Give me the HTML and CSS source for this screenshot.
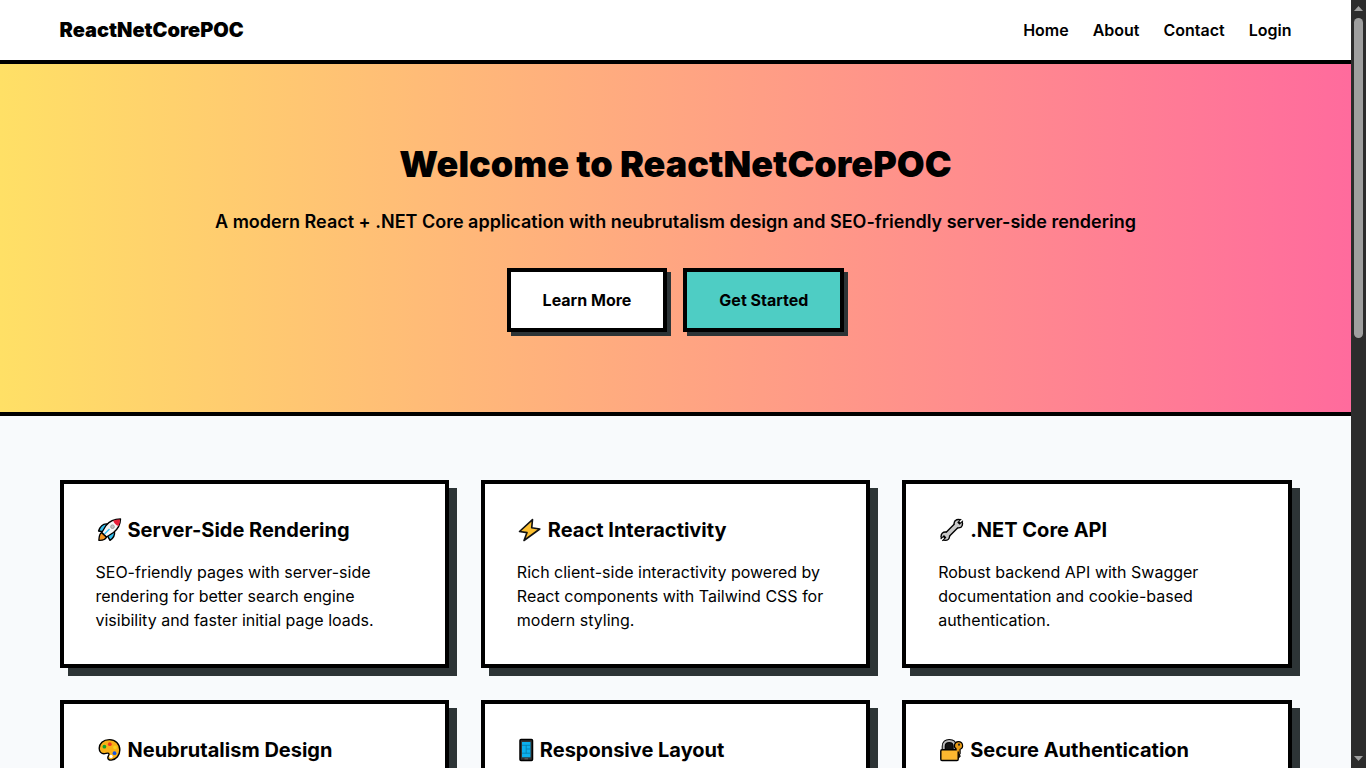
FILE: index.html
```html
<!DOCTYPE html>
<html lang="en">
<head>
  <meta charset="utf-8">
  <meta name="viewport" content="width=device-width, initial-scale=1">
  <title>ReactNetCorePOC</title>
  <link rel="stylesheet" href="styles.css">
</head>
<body>
  <div class="page">
    <header class="header">
      <div class="container header-inner">
        <a class="brand" href="#">ReactNetCorePOC</a>
        <nav class="nav">
          <a href="#">Home</a>
          <a href="#">About</a>
          <a href="#">Contact</a>
          <a href="#">Login</a>
        </nav>
      </div>
    </header>
    <main>
      <section class="hero">
        <h1>Welcome to ReactNetCorePOC</h1>
        <p>A modern React + .NET Core application with neubrutalism design and SEO-friendly server-side rendering</p>
        <div class="actions">
          <button class="btn" type="button">Learn More</button>
          <button class="btn btn-teal" type="button">Get Started</button>
        </div>
      </section>
      <section class="container features">
        <article class="card">
          <h2>
            <svg width="26" height="26" viewBox="0 0 26 26" aria-hidden="true" stroke="#000" stroke-width="1.400" stroke-linejoin="round">
              <path d="M11.500 7C8 6.500 4.500 8.500 2.600 14l5.900 1z" fill="#35c1f1"/>
              <path d="M18.500 14c.5 4-1.500 7.500-4.500 9.300L11 18z" fill="#35c1f1"/>
              <path d="M5.500 15.500c-2.300 1.500-2.500 4.500-2.600 7.800 3.500.2 6.300-.3 7.600-3.300z" fill="#f7941d"/>
              <path d="M24.500 2C18 2 13.500 4 10 8.500L5.800 15.500 10.500 20l7-4.500C22 12 24.300 8 24.500 2z" fill="#f6f6f6"/>
              <path d="M24 2.500c-2.600 0-4.900.5-6.900 1.300 1 2.600 2.800 4.400 5.400 5.300 1-2 1.400-4.200 1.500-6.600z" fill="#e8203a" stroke="none"/>
              <circle cx="16.500" cy="9.700" r="1.800" fill="#c4c4c4" stroke="#9c9c9c" stroke-width="1"/>
              <path d="m8.500 17 5-5" stroke="#35c1f1"/>
            </svg>
            Server-Side Rendering
          </h2>
          <p>SEO-friendly pages with server-side rendering for better search engine visibility and faster initial page loads.</p>
        </article>
        <article class="card">
          <h2>
            <svg width="25" height="26" viewBox="0 0 25 26" aria-hidden="true">
              <path d="M15.500 2.600 2.500 14.500 10 15.600 7 23.500 22.800 12 14.700 10.800z" fill="#fcbf2f" stroke="#111" stroke-width="1.600" stroke-linejoin="round"/>
            </svg>
            React Interactivity
          </h2>
          <p>Rich client-side interactivity powered by React components with Tailwind CSS for modern styling.</p>
        </article>
        <article class="card">
          <h2>
            <svg width="26" height="26" viewBox="0 0 26 26" aria-hidden="true">
              <path d="M7.500 19.500 20.500 6.500" stroke="#000" stroke-width="6.600"/>
              <circle cx="7.300" cy="19.200" r="4.900" fill="#000"/>
              <circle cx="20.300" cy="6.700" r="4.900" fill="#000"/>
              <circle cx="7.300" cy="19.200" r="3.500" fill="#c9c9c9"/>
              <circle cx="20.300" cy="6.700" r="3.500" fill="#c9c9c9"/>
              <path d="M7.500 19.500 20.500 6.500" stroke="#c9c9c9" stroke-width="3.800"/>
              <path d="M7.200 19.300 3.500 23M20.400 6.600 24.100 2.900" stroke="#000" stroke-width="3.400"/>
              <path d="M5.700 20.800 2.500 24M21.900 5.100 25.100 1.900" stroke="#fff" stroke-width="1.400"/>
            </svg>
            .NET Core API
          </h2>
          <p>Robust backend API with Swagger documentation and cookie-based authentication.</p>
        </article>
        <article class="card">
          <h2>
            <svg width="26" height="26" viewBox="0 0 26 26" aria-hidden="true">
              <path d="M13.500 2.600C7 2.600 3.200 6.500 3.200 11.300c0 3.500 2.300 5.400 4.800 5.400 1.700 0 3.500-1 4.600-.4 1.600 1-.8 2.600-.8 4.400 0 1.800 1.600 2.700 3.600 2.400 5-.8 8.400-4.900 8.400-10.100 0-6.100-4.400-10.400-10.300-10.400z" fill="#f9b017" stroke="#000" stroke-width="1.400"/>
              <circle cx="8.400" cy="9.700" r="1.900" fill="#16a32a"/>
              <circle cx="13.800" cy="7.200" r="1.900" fill="#f03a20"/>
              <circle cx="19" cy="10.400" r="1.800" fill="#f8d51b"/>
              <circle cx="18.500" cy="16.200" r="1.900" fill="#1554e0"/>
              <circle cx="15" cy="19.400" r="1.700" fill="#fff"/>
            </svg>
            Neubrutalism Design
          </h2>
        </article>
        <article class="card">
          <h2>
            <svg width="17" height="26" viewBox="0 0 17 26" aria-hidden="true">
              <rect x="3" y="2.500" width="12.500" height="21" rx="1" fill="#333" stroke="#000" stroke-width="1.500"/>
              <path d="M5 5h8.500v15.300H5z" fill="#0db1ee"/>
              <path d="M5 8.300h8.500M9.500 12h4M5 16.200h8.500M9.200 8.300v8" fill="none" stroke="#087aa8" stroke-width=".8"/>
              <path d="M7.500 21.800h3.500" stroke="#666"/>
            </svg>
            Responsive Layout
          </h2>
        </article>
        <article class="card">
          <h2>
            <svg width="26" height="26" viewBox="0 0 26 26" aria-hidden="true">
              <path d="M5.700 13V9.200C5.700 5.600 8 3.900 11.200 3.900s5.500 1.700 5.500 5.300V13" fill="#111" stroke="#000" stroke-width="4"/>
              <path d="M5.700 13V9.200C5.700 5.600 8 3.900 11.200 3.900s5.500 1.700 5.500 5.300V13" fill="none" stroke="#b8b8b8" stroke-width="2"/>
              <path d="M20.500 4.600a4 4 0 0 0-2 7.500v7.400l1.800 1.500 1.800-1.800-.8-1.500.8-1.200v-4.200a4 4 0 0 0-1.600-7.700z" fill="#e89b16" stroke="#000" stroke-width="1.200"/>
              <rect x="2.800" y="12.700" width="17.400" height="10.800" rx="1.200" fill="#fcb830" stroke="#000" stroke-width="1.400"/>
              <path d="M18.700 11v3.500h2.200V11z" fill="#e89b16"/>
              <circle cx="21" cy="7.700" r="1.100" fill="#222"/>
            </svg>
            Secure Authentication
          </h2>
        </article>
      </section>
    </main>
  </div>
  <div class="scrollbar" aria-hidden="true">
    <svg width="9" height="5" viewBox="0 0 9 5"><path d="M4.500 0 9 5H0z" fill="#9f9f9f"/></svg>
    <div class="track"><div class="thumb"></div></div>
    <svg width="9" height="5" viewBox="0 0 9 5"><path d="M0 0h9L4.500 5z" fill="#9f9f9f"/></svg>
  </div>
</body>
</html>
```
FILE: styles.css
```css
*, *::before, *::after {
  box-sizing: border-box;
}

body {
  margin: 0;
  height: 100vh;
  display: flex;
  overflow: hidden;
  font: 400 16px/24px Inter, "Liberation Sans", sans-serif;
  color: #000;
  background: #f8fafc;
}

h1, h2, p {
  margin: 0;
}

a {
  color: inherit;
  text-decoration: none;
}

.page {
  flex: 1;
  min-width: 0;
  overflow: hidden;
}

.container {
  max-width: 1280px;
  margin: 0 auto;
  padding: 0 24px;
}

.header {
  background: #fff;
  border-bottom: 4px solid #000;
}

.header-inner {
  display: flex;
  align-items: center;
  justify-content: space-between;
  padding-top: 16px;
  padding-bottom: 16px;
}

.brand {
  font-size: 20px;
  line-height: 28px;
  font-weight: 900;
}

.nav {
  display: flex;
  gap: 24px;
  font-weight: 600;
}

.hero {
  padding: 80px 24px;
  text-align: center;
  background: linear-gradient(90deg, #ffe066, #ff6b9d);
  border-bottom: 4px solid #000;
}

.hero h1 {
  margin-bottom: 24px;
  font-size: 36px;
  line-height: 40px;
  font-weight: 900;
}

.hero p {
  margin-bottom: 32px;
  font-size: 18px;
  line-height: 28px;
  font-weight: 600;
}

.actions {
  display: flex;
  justify-content: center;
  gap: 16px;
}

.btn {
  padding: 16px 32px;
  border: 4px solid #000;
  border-radius: 0;
  background: #fff;
  box-shadow: 4px 4px 0 #2d3436;
  color: #000;
  font: inherit;
  font-weight: 700;
}

.btn-teal {
  background: #4ecdc4;
}

.features {
  display: grid;
  grid-template-columns: repeat(3, 1fr);
  gap: 32px;
  padding-top: 64px;
  padding-bottom: 64px;
}

.card {
  min-height: 188px;
  padding: 32px;
  border: 4px solid #000;
  background: #fff;
  box-shadow: 8px 8px 0 #2d3436;
}

.card h2 {
  display: flex;
  align-items: center;
  gap: 6px;
  margin-bottom: 16px;
  font-size: 20px;
  line-height: 28px;
  font-weight: 700;
}

.card svg {
  flex: none;
}

.scrollbar {
  flex: none;
  width: 15px;
  padding: 6px 3px 7px;
  display: flex;
  flex-direction: column;
  gap: 7px;
  background: #2c2c2c;
}

.scrollbar svg {
  flex: none;
}

.track {
  flex: 1;
}

.thumb {
  height: 43.8%;
  border-radius: 5px;
  background: #9f9f9f;
}
```
